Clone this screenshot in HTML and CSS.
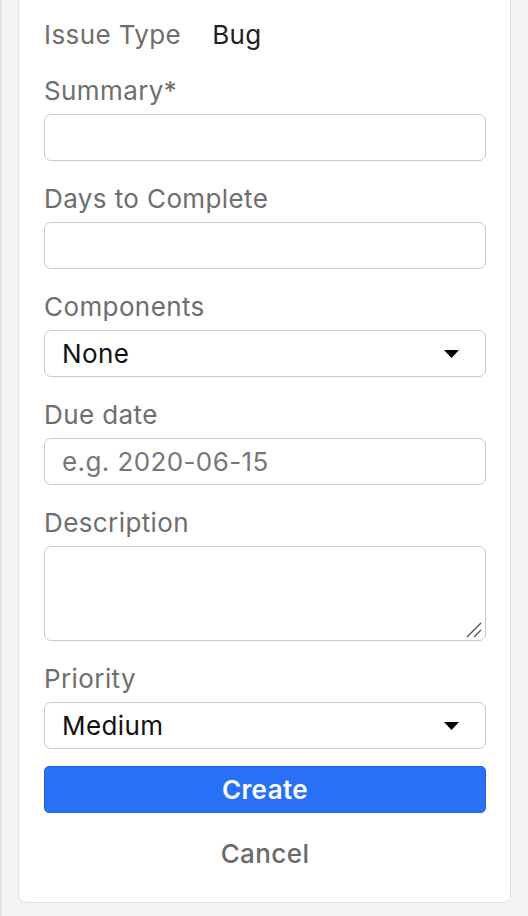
FILE: index.html
```html
<!DOCTYPE html>
<html>
<head>
<meta charset="utf-8">
<link rel="stylesheet" href="styles.css">
</head>
<body>
<div class="page">
  <form class="card">
    <div class="type-row">
      <span class="label">Issue Type</span>
      <span class="type-value">Bug</span>
    </div>
    <div class="field">
      <label class="label">Summary*</label>
      <input class="control" type="text">
    </div>
    <div class="field">
      <label class="label">Days to Complete</label>
      <input class="control" type="text">
    </div>
    <div class="field">
      <label class="label">Components</label>
      <div class="select">
        <span class="select-text">None</span>
        <svg class="caret" width="15" height="8" viewBox="0 0 15 8"><path d="M0 0H15L7.5 8Z" fill="#000"/></svg>
      </div>
    </div>
    <div class="field">
      <label class="label">Due date</label>
      <input class="control" type="text" placeholder="e.g. 2020-06-15">
    </div>
    <div class="field">
      <label class="label">Description</label>
      <div class="area-wrap">
        <textarea class="control area"></textarea>
        <svg class="grip" width="16" height="16" viewBox="0 0 16 16"><path d="M1 15L15 1M8 15L15 8" stroke="#555" stroke-width="1.4" fill="none"/></svg>
      </div>
    </div>
    <div class="field last">
      <label class="label">Priority</label>
      <div class="select">
        <span class="select-text">Medium</span>
        <svg class="caret" width="15" height="8" viewBox="0 0 15 8"><path d="M0 0H15L7.5 8Z" fill="#000"/></svg>
      </div>
    </div>
    <button type="button" class="create">Create</button>
    <button type="button" class="cancel">Cancel</button>
  </form>
</div>
</body>
</html>
```
FILE: styles.css
```css
html, body {
  margin: 0;
  padding: 0;
  background: #f4f4f4;
}
body {
  font-family: Inter, "Liberation Sans", Arial, sans-serif;
  font-size: 26px;
  letter-spacing: 0.4px;
}
.page {
  border-left: 2px solid #e3e3e3;
  padding: 0 17px 13px 16px;
  height: 916px;
  box-sizing: border-box;
}
.card {
  background: #fff;
  border: 1px solid #e2e2e2;
  border-top: none;
  border-radius: 0 0 8px 8px;
  padding: 20px 24px 33px 25px;
  display: flex;
  flex-direction: column;
}
.label {
  display: block;
  color: #6e6e6e;
  line-height: 30px;
  font-size: 26px;
}
.type-row {
  display: flex;
  gap: 31px;
  margin-bottom: 26px;
}
.type-value {
  color: #222;
  line-height: 30px;
}
.field {
  display: flex;
  flex-direction: column;
  gap: 8px;
  margin-bottom: 23px;
}
.field.last {
  margin-bottom: 17px;
}
.control {
  box-sizing: border-box;
  height: 47px;
  width: 100%;
  border: 1px solid #c9c9c9;
  border-radius: 7px;
  background: #fff;
  padding: 0 17px;
  font-family: inherit;
  font-size: 26px;
  letter-spacing: 0.4px;
  color: #111;
  outline: none;
  margin: 0;
}
.control::placeholder {
  color: #777;
}
.area-wrap {
  position: relative;
  height: 95px;
}
.area {
  display: block;
  height: 95px;
  resize: none;
  padding-top: 8px;
}
.grip {
  position: absolute;
  right: 4px;
  bottom: 3px;
}
.select {
  box-sizing: border-box;
  height: 47px;
  border: 1px solid #c9c9c9;
  border-radius: 7px;
  display: flex;
  align-items: center;
  justify-content: space-between;
  padding: 0 26px 0 17px;
}
.select-text {
  color: #111;
}
.caret {
  display: block;
}
.create {
  height: 47px;
  border: 1px solid #2360d8;
  border-radius: 5px;
  background: #2a70f7;
  color: #fff;
  font-family: inherit;
  font-size: 26px;
  letter-spacing: 0.4px;
  font-weight: 600;
  margin: 0;
  padding: 0;
}
.cancel {
  margin-top: 26px;
  border: none;
  background: none;
  padding: 0;
  height: 30px;
  line-height: 30px;
  color: #6a6a6a;
  font-family: inherit;
  font-size: 26px;
  letter-spacing: 0.4px;
  font-weight: 500;
}
```
